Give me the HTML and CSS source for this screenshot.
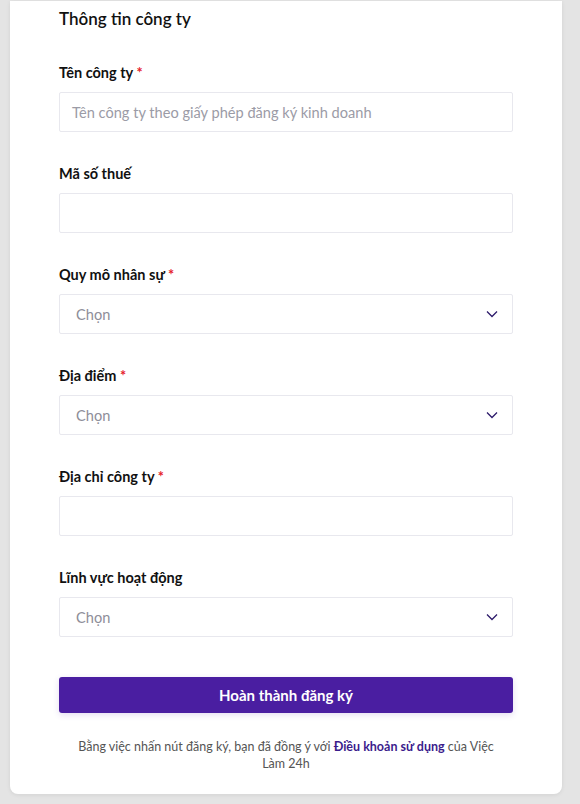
FILE: index.html
```html
<!DOCTYPE html>
<html lang="vi">
<head>
<meta charset="utf-8">
<link rel="stylesheet" href="styles.css">
</head>
<body>
<div class="card">
  <h2 class="title">Thông tin công ty</h2>
  <form class="form">
    <div class="field">
      <label class="label">Tên công ty <span class="req">*</span></label>
      <div class="input"><span class="ph">Tên công ty theo giấy phép đăng ký kinh doanh</span></div>
    </div>
    <div class="field">
      <label class="label">Mã số thuế</label>
      <div class="input"></div>
    </div>
    <div class="field">
      <label class="label">Quy mô nhân sự <span class="req">*</span></label>
      <div class="input select"><span class="sel">Chọn</span>
        <svg class="chev" width="12" height="8" viewBox="0 0 12 8"><path d="M1 1.5 L6 6.5 L11 1.5" fill="none" stroke="#2d1b6b" stroke-width="1.3"/></svg>
      </div>
    </div>
    <div class="field">
      <label class="label">Địa điểm <span class="req">*</span></label>
      <div class="input select"><span class="sel">Chọn</span>
        <svg class="chev" width="12" height="8" viewBox="0 0 12 8"><path d="M1 1.5 L6 6.5 L11 1.5" fill="none" stroke="#2d1b6b" stroke-width="1.3"/></svg>
      </div>
    </div>
    <div class="field">
      <label class="label">Địa chỉ công ty <span class="req">*</span></label>
      <div class="input"></div>
    </div>
    <div class="field">
      <label class="label">Lĩnh vực hoạt động</label>
      <div class="input select"><span class="sel">Chọn</span>
        <svg class="chev" width="12" height="8" viewBox="0 0 12 8"><path d="M1 1.5 L6 6.5 L11 1.5" fill="none" stroke="#2d1b6b" stroke-width="1.3"/></svg>
      </div>
    </div>
    <div class="submit">Hoàn thành đăng ký</div>
    <p class="terms">Bằng việc nhấn nút đăng ký, bạn đã đồng ý với <a class="link">Điều khoản sử dụng</a> của Việc Làm 24h</p>
  </form>
</div>
</body>
</html>
```

FILE: styles.css
```css
html, body {
  margin: 0;
  padding: 0;
}
body {
  background: #e4e4e4;
  font-family: Lato, "Noto Sans", sans-serif;
  color: #111;
  height: 804px;
  overflow: hidden;
  display: flex;
  flex-direction: column;
  justify-content: flex-end;
}
.card {
  margin: 0 18px 10px 10px;
  background: #fff;
  border-radius: 0 0 8px 8px;
  box-shadow: 0 1px 4px rgba(0,0,0,0.08);
  padding: 6px 49px 22px;
}
.title {
  margin: 0 0 32px;
  font-size: 17px;
  line-height: 24px;
  font-weight: 600;
  color: #111;
}
.form {
  display: flex;
  flex-direction: column;
}
.field {
  display: flex;
  flex-direction: column;
  gap: 9px;
  margin-bottom: 32px;
}
.label {
  font-size: 14.5px;
  line-height: 20px;
  font-weight: 700;
  color: #111;
}
.req {
  color: #e5202a;
}
.input {
  height: 40px;
  box-sizing: border-box;
  border: 1px solid #e8e8ee;
  border-radius: 2px;
  display: flex;
  align-items: center;
  padding: 0 12px;
  font-size: 14.6px;
}
.ph {
  color: #9b9ba6;
}
.select {
  padding: 0 14px 0 16px;
  justify-content: space-between;
}
.sel {
  color: #8e8e99;
}
.chev {
  display: block;
}
.submit {
  margin-top: 8px;
  height: 36px;
  border-radius: 3px;
  background: #4a1ea1;
  color: #fff;
  font-size: 15px;
  font-weight: 700;
  display: flex;
  align-items: center;
  justify-content: center;
  box-shadow: 0 2px 6px rgba(74,30,161,0.15);
}
.terms {
  margin: 25px 0 0;
  padding: 0 14px;
  text-align: center;
  font-size: 12.5px;
  line-height: 17px;
  color: #555;
}
.link {
  color: #3b1c8c;
  font-weight: 700;
}
```
